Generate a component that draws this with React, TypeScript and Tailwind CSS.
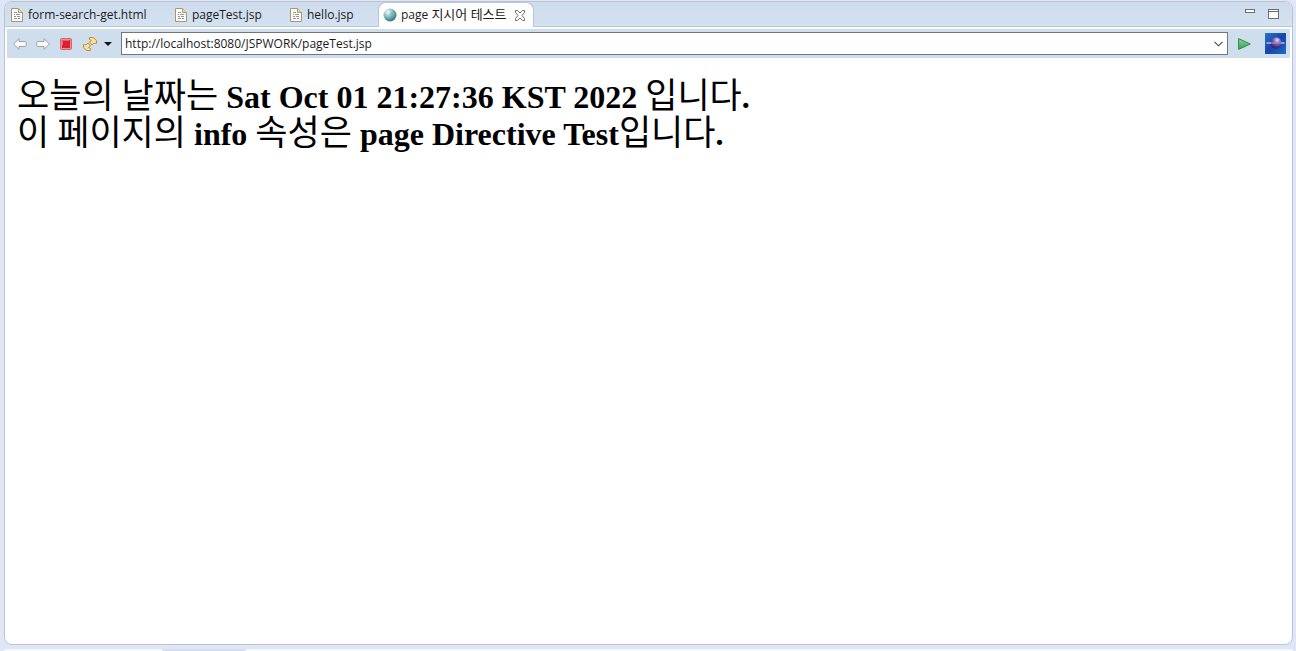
import { useState } from "react";

const uiFont = "font-['Open_Sans','Noto_Sans_CJK_KR',sans-serif]";

function FileIcon() {
  return (
    <svg width="12" height="14" viewBox="0 0 12 14" className="shrink-0" aria-hidden="true">
      <path d="M.5.5h7l4 4v9H.5z" fill="#fdfcf3" stroke="#a9966c" />
      <path d="M7.500.5v4h4" fill="#ead9a5" stroke="#b49a62" />
      <path d="M3 4.500h3M5 6.500h4M3 10.500h3" stroke="#7f98c6" />
      <path d="M3 6.500h1M3 8.500h2M7 10.500h2" stroke="#9488b4" />
      <path d="M6 8.500h3" stroke="#7f98c6" />
    </svg>
  );
}

function GlobeIcon() {
  return (
    <svg width="14" height="14" viewBox="0 0 14 14" className="shrink-0" aria-hidden="true">
      <defs>
        <radialGradient id="globe" cx=".35" cy=".28" r=".75">
          <stop offset="0" stopColor="#f0fafa" />
          <stop offset=".4" stopColor="#9cc8ca" />
          <stop offset=".8" stopColor="#4c8e98" />
          <stop offset="1" stopColor="#3d6c88" />
        </radialGradient>
      </defs>
      <circle cx="7" cy="7" r="6.500" fill="url(#globe)" />
      <path d="M8 4c2-1 3 0 4 2-1 3-3 4-5 3 1-2-1-3 1-5z" fill="#6fb5a2" opacity=".5" />
    </svg>
  );
}

function CloseIcon() {
  return (
    <svg width="12" height="11" viewBox="0 0 12 11" aria-hidden="true">
      <path
        d="M1.500.5h2L6 3 8.500.5h2v2L8 5.500l2.500 3v2h-2L6 8l-2.500 2.500h-2v-2l2.500-3-2.500-3z"
        fill="#fff"
        stroke="#6f6f6f"
      />
    </svg>
  );
}

function ArrowIcon({ forward = false }: { forward?: boolean }) {
  return (
    <svg width="14" height="12" viewBox="0 0 14 12" className={forward ? "-scale-x-100" : ""} aria-hidden="true">
      <path
        d="M.6 6 6 .6v2.900h6.200q1 0 1 1v3q0 1-1 1H6v2.900z"
        fill="#f8f8f6"
        stroke="#a0a2a4"
        strokeLinejoin="round"
      />
    </svg>
  );
}

function StopIcon() {
  return (
    <svg width="12" height="12" viewBox="0 0 12 12" aria-hidden="true">
      <rect x=".5" y=".5" width="11" height="11" rx="1" fill="#e98f92" stroke="#d2666c" />
      <rect x="2" y="2" width="8" height="8" fill="#dc1f2c" />
      <path d="M2.500 7V2.500H9" fill="none" stroke="#ee5c60" />
    </svg>
  );
}

function RefreshIcon() {
  return (
    <svg width="16" height="16" viewBox="0 0 16 16" aria-hidden="true">
      <g fill="#fbe3a0" stroke="#c08d35" strokeLinejoin="round">
        <path d="M7.500 1.500H11l3.500 3v3h-1l-1.500-.5-2 2-2.500-3 2-1.500-2-1z" />
        <path d="M8.500 14.500H5l-3.500-3v-3h1L4 9l2-2 2.500 3-2 1.500 2 1z" />
      </g>
    </svg>
  );
}

function EclipseIcon() {
  return (
    <svg width="21" height="21" viewBox="0 0 21 21" aria-hidden="true">
      <defs>
        <linearGradient id="sky" x1="0" y1="0" x2="1" y2="1">
          <stop offset="0" stopColor="#2a74cc" />
          <stop offset=".5" stopColor="#1546a8" />
          <stop offset="1" stopColor="#1f6cc8" />
        </linearGradient>
        <radialGradient id="moon" cx=".6" cy=".25" r=".75">
          <stop offset="0" stopColor="#e6dcf6" />
          <stop offset=".4" stopColor="#7d66b8" />
          <stop offset="1" stopColor="#2a186a" />
        </radialGradient>
      </defs>
      <path d="M0 0h21v21H0z" fill="url(#sky)" />
      <circle cx="11" cy="10" r="5.800" fill="url(#moon)" />
      <path d="M1.500 10h4.500M16 10h3.500" stroke="#b9b4ee" strokeWidth="1.500" />
      <path d="M6 10h10" stroke="#a392d6" />
    </svg>
  );
}

const files = [
  { name: "form-search-get.html", space: "w-[164px]" },
  { name: "pageTest.jsp", space: "w-[115px]" },
  { name: "hello.jsp", space: "w-[88px]" },
];

function Ko({ children }: { children: string }) {
  return <span className="font-['Noto_Sans_CJK_KR',sans-serif] text-[35px] font-normal">{children}</span>;
}

export default function App() {
  const [url, setUrl] = useState("http://localhost:8080/JSPWORK/pageTest.jsp");
  return (
    <div className={`flex h-screen flex-col overflow-hidden bg-[#dfe6f5] text-xs text-[#1c1c1c] ${uiFont}`}>
      <section className="mt-px mr-[3px] ml-1 flex min-h-0 flex-1 flex-col overflow-hidden rounded-lg border border-[#bdc3d3] bg-white">
        <header className="flex h-[25px] shrink-0 bg-linear-to-b from-[#cddcec] to-[#d4e2f2]">
          <div role="tablist" className="flex">
            {files.map((f, i) => (
              <button
                key={f.name}
                role="tab"
                aria-selected="false"
                className={`box-content flex items-center gap-[5px] border-b border-[#b9c6d8] pt-[2px] whitespace-nowrap ${f.space} ${i === 0 ? "pl-[6px]" : ""}`}
              >
                <FileIcon />
                {f.name}
              </button>
            ))}
            <div className="flex items-center gap-[7px] rounded-t-lg border-x border-t border-[#b9c6d8] bg-white pr-[7px] pl-1">
              <button role="tab" aria-selected="true" className="flex items-center gap-1 whitespace-nowrap">
                <GlobeIcon />
                <span>
                  page <span className="text-[13px]">지시어 테스트</span>
                </span>
              </button>
              <button aria-label="Close tab">
                <CloseIcon />
              </button>
            </div>
          </div>
          <div className="flex flex-1 items-start justify-end gap-[13px] border-b border-[#b9c6d8] pt-[7px] pr-[13px]">
            <button aria-label="Minimize" className="h-1 w-[10px] border border-[#6a6f76] bg-white" />
            <button
              aria-label="Maximize"
              className="flex h-[10px] w-[11px] flex-col items-stretch justify-start border border-[#6a6f76] bg-white"
            >
              <span className="h-[2px] border-b border-[#6a6f76]" />
            </button>
          </div>
        </header>

        <div className="mx-[2px] mt-[2px] flex h-[29px] shrink-0 items-center bg-[#cfdeed] pr-1 pl-[6px]">
          <div className="flex items-center gap-[9px]">
            <button aria-label="Back">
              <ArrowIcon />
            </button>
            <button aria-label="Forward">
              <ArrowIcon forward />
            </button>
            <button aria-label="Stop" className="ml-px">
              <StopIcon />
            </button>
          </div>
          <button aria-label="Refresh" className="ml-[10px]">
            <RefreshIcon />
          </button>
          <button aria-label="Refresh options" className="mr-[9px] ml-[6px]">
            <svg width="8" height="4" viewBox="0 0 8 4" aria-hidden="true">
              <path d="M0 0h8L4 4z" fill="#151515" />
            </svg>
          </button>
          <div className="flex h-[23px] flex-1 items-center border border-[#707780] bg-white pr-1 pl-[3px]">
            <input
              aria-label="Address"
              value={url}
              onChange={(e) => setUrl(e.target.value)}
              className="min-w-0 flex-1 outline-none"
            />
            <button aria-label="Address history">
              <svg width="9" height="6" viewBox="0 0 9 6" aria-hidden="true">
                <path d="m.5.8 4 4 4-4" fill="none" stroke="#444" strokeWidth="1.100" />
              </svg>
            </button>
          </div>
          <button aria-label="Go" className="mr-[14px] ml-[10px]">
            <svg width="13" height="12" viewBox="0 0 13 12" aria-hidden="true">
              <defs>
                <linearGradient id="go" x1="0" y1="0" x2="0" y2="1">
                  <stop offset="0" stopColor="#8bd39a" />
                  <stop offset="1" stopColor="#35a34f" />
                </linearGradient>
              </defs>
              <path d="M.6.6 12.300 6 .6 11.400z" fill="url(#go)" stroke="#338a50" strokeLinejoin="round" />
            </svg>
          </button>
          <a href="#home" aria-label="Home page">
            <EclipseIcon />
          </a>
        </div>

        <main className="flex-1 px-3 pt-4 text-black">
          <h1 className="font-['Liberation_Serif',serif] text-[32px] leading-[37px] font-bold">
            <span className="block h-[37px]">
              <Ko>오늘의</Ko> <Ko>날짜는</Ko> Sat Oct 01 21:27:36 KST 2022 <Ko>입니다</Ko>.
            </span>
            <span className="block h-[37px]">
              <Ko>이</Ko> <Ko>페이지의</Ko> info <Ko>속성은</Ko> page Directive Test<Ko>입니다</Ko>.
            </span>
          </h1>
        </main>
      </section>
      <footer className="mt-1 mr-[3px] ml-1 flex h-[2px] shrink-0 rounded-t-lg bg-[#f4f7fd] pl-[158px]">
        <div className="w-[84px] rounded-t-lg bg-[#d3def0]" />
      </footer>
    </div>
  );
}
